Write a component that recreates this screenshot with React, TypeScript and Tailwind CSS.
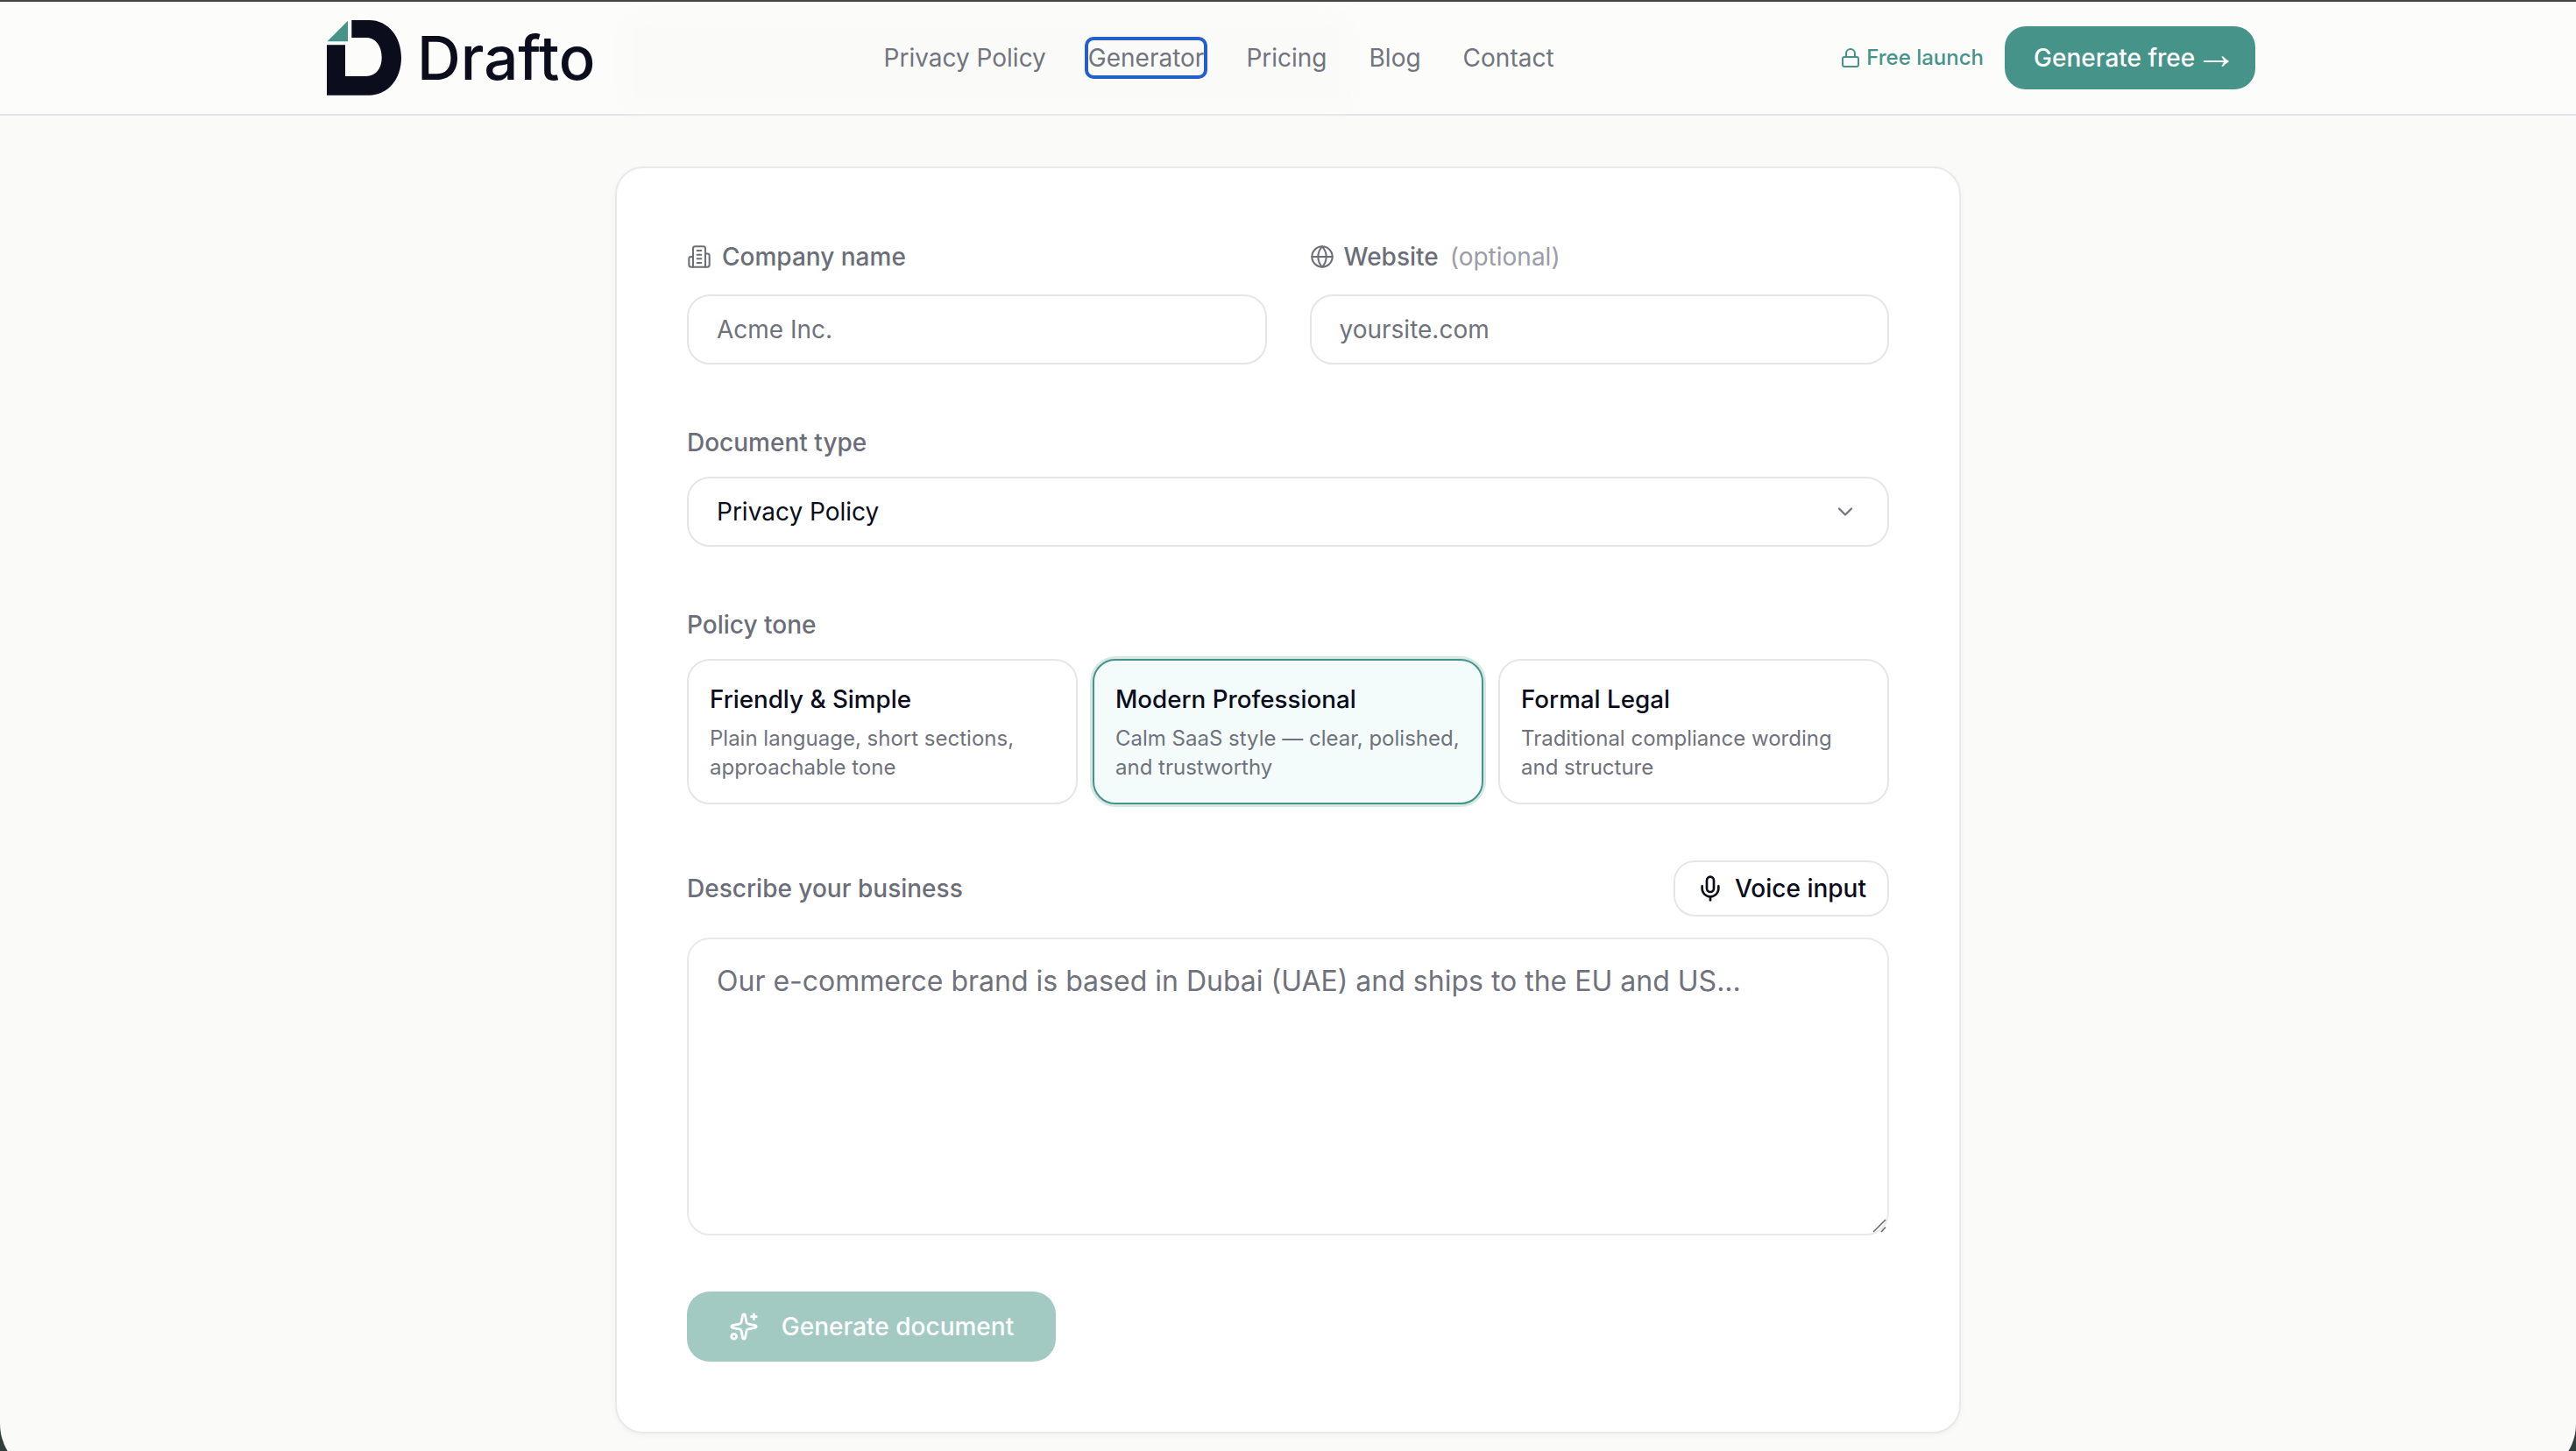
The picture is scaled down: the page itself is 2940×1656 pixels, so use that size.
import { Globe, ChevronDown, Lock, Mic, Sparkles } from "lucide-react";

const tones = [
  { t: "Friendly & Simple", d: ["Plain language, short sections,", "approachable tone"], active: false },
  { t: "Modern Professional", d: ["Calm SaaS style — clear, polished,", "and trustworthy"], active: true },
  { t: "Formal Legal", d: ["Traditional compliance wording", "and structure"], active: false },
];

function Logo() {
  return (
    <div className="flex items-center">
      <svg width="85" height="86" viewBox="0 0 85 86" className="shrink-0">
        <path d="M0.5 24.3 L24 0.7 V24.3 Z" fill="#46938a" />
        <path
          d="M28.3 0 H48.3 C70 0 85 19 85 42.8 C85 67 70 85.7 48.3 85.7 H0 V28.3 H21 V64 H45 C56 64 62.7 55 62.7 42.8 C62.7 30 56 20 45 20 H28.3 Z"
          fill="#0b0d1c"
        />
      </svg>
      <span className="ml-[18px] text-[69px] leading-[86px] font-medium text-[#0b0d1c]">Drafto</span>
    </div>
  );
}

function BuildingIcon() {
  return (
    <svg
      width="28"
      height="28"
      viewBox="0 0 24 24"
      fill="none"
      stroke="currentColor"
      strokeWidth="1.75"
      strokeLinecap="round"
      strokeLinejoin="round"
      className="mr-[12px] shrink-0"
    >
      <path d="M6 22V4a2 2 0 0 1 2-2h8a2 2 0 0 1 2 2v18Z" />
      <path d="M6 12H4a2 2 0 0 0-2 2v6a2 2 0 0 0 2 2h2" />
      <path d="M18 9h2a2 2 0 0 1 2 2v9a2 2 0 0 1-2 2h-2" />
      <path d="M10 6h4" />
      <path d="M10 10h4" />
      <path d="M10 14h4" />
      <path d="M10 18h4" />
    </svg>
  );
}

function Label({ children }: { children: React.ReactNode }) {
  return <div className="flex items-center h-[38px] text-[28px] font-medium text-[#6b6e78]">{children}</div>;
}

export default function App() {
  const inputCls =
    "block w-full h-[80px] px-[32px] rounded-[26px] border-2 border-[#e6e6e8] bg-white text-[28px] outline-none placeholder:text-[#6f727c]";
  return (
    <div className="h-[1656px] overflow-hidden bg-[#2f3f3d]" style={{ fontFamily: "Inter, sans-serif" }}>
      <div className="h-[1685px] rounded-b-[60px] bg-[#fafaf8] border-t-2 border-[#44443f]">
        <header className="relative h-[130px] border-b-2 border-[#e4e4e8] bg-[#fcfcfa] flex items-center pl-[373px] pr-[366px]">
          <div className="absolute left-[711px] top-[16px] w-[830px] h-[106px] rounded-[20px] bg-[#fafbf9] blur-[8px]" />
          <div className="relative">
            <Logo />
          </div>
          <nav className="relative ml-[329px] flex items-center gap-[48px] text-[28px] text-[#72747e]">
            <span>Privacy Policy</span>
            <span className="h-[40px] leading-[40px] rounded-[6px] outline-[4px] outline-[#2560c8]">Generator</span>
            <span>Pricing</span>
            <span>Blog</span>
            <span>Contact</span>
          </nav>
          <div className="relative ml-auto flex items-center gap-[24px]">
            <span className="flex items-center gap-[6px] text-[24px] font-medium text-[#46938a]">
              <Lock size={24} strokeWidth={2} />
              Free launch
            </span>
            <span className="h-[72px] w-[286px] flex items-center gap-[-1px] pl-[33px] rounded-[24px] bg-[#46938a] text-[28px] font-medium text-white">
              Generate free
              <span
                className="font-normal text-[48px] leading-[48px] mt-[-8px]"
                style={{ fontFamily: "'Liberation Sans', sans-serif" }}
              >
                →
              </span>
            </span>
          </div>
        </header>

        <main className="pt-[58px]">
          <div className="mx-auto w-[1536px] h-[1446px] rounded-[32px] border-2 border-[#e9e9eb] bg-white shadow-[0_2px_6px_rgba(0,0,0,0.04)] px-[80px] pt-[82px]">
            <div className="grid grid-cols-2 gap-[49px]">
              <div>
                <Label>
                  <BuildingIcon />
                  Company name
                </Label>
                <input className={"mt-[24px] " + inputCls} placeholder="Acme Inc." />
              </div>
              <div>
                <Label>
                  <Globe size={28} strokeWidth={1.75} className="mr-[11px]" />
                  Website
                  <span className="ml-[13px] font-normal text-[#9b9da6]">(optional)</span>
                </Label>
                <input className={"mt-[24px] " + inputCls} placeholder="yoursite.com" />
              </div>
            </div>

            <div className="mt-[70px]">
              <Label>Document type</Label>
              <div className="mt-[20px] h-[80px] px-[32px] rounded-[26px] border-2 border-[#e6e6e8] flex items-center justify-between text-[28px] text-[#0b0d1c]">
                <span>Privacy Policy</span>
                <ChevronDown size={28} strokeWidth={2} className="text-[#72747e] mr-[2px]" />
              </div>
            </div>

            <div className="mt-[70px]">
              <Label>Policy tone</Label>
              <div className="mt-[20px] grid grid-cols-3 gap-[17px]">
                {tones.map((x) => (
                  <div
                    key={x.t}
                    className={
                      x.active
                        ? "h-[166px] rounded-[26px] border-2 border-[#46938a] bg-[#f3fcfb] shadow-[0_0_0_3px_#d5e9e5] px-[24px] pt-[26px]"
                        : "h-[166px] rounded-[26px] border-2 border-[#e6e6e8] bg-white px-[24px] pt-[26px]"
                    }
                  >
                    <div className="text-[27.75px] leading-[36px] font-medium text-[#0b0d1c] whitespace-nowrap">{x.t}</div>
                    <div className="mt-[10px] text-[24px] leading-[33px] text-[#6f727c] whitespace-nowrap">
                      {x.d[0]}
                      <br />
                      {x.d[1]}
                    </div>
                  </div>
                ))}
              </div>
            </div>

            <div className="mt-[64px] flex items-center justify-between">
              <Label>Describe your business</Label>
              <div className="h-[64px] w-[246px] rounded-[24px] border-2 border-[#e6e6e8] flex items-center justify-center gap-[12px] text-[28px] font-medium text-[#0b0d1c]">
                <Mic size={32} strokeWidth={2} />
                Voice input
              </div>
            </div>

            <div className="relative mt-[24px]">
              <textarea
                className="block w-full h-[340px] px-[32px] pt-[26px] rounded-[26px] border-2 border-[#e9e9eb] bg-white text-[32px] leading-[44px] outline-none resize-none placeholder:text-[#6f727c]"
                placeholder="Our e-commerce brand is based in Dubai (UAE) and ships to the EU and US..."
              />
              <svg width="20" height="20" viewBox="0 0 20 20" className="absolute right-0 bottom-0 text-[#666666]">
                <path d="M2 16 L16 2 M11 16 L16 10.5" stroke="currentColor" strokeWidth="1.5" fill="none" />
              </svg>
            </div>

            <div className="mt-[64px] h-[80px] w-[421px] rounded-[26px] bg-[#a2cac3] flex items-center justify-center gap-[26px] text-[28px] font-medium text-white">
              <Sparkles size={34} strokeWidth={2} />
              Generate document
            </div>
          </div>
        </main>
      </div>
    </div>
  );
}
